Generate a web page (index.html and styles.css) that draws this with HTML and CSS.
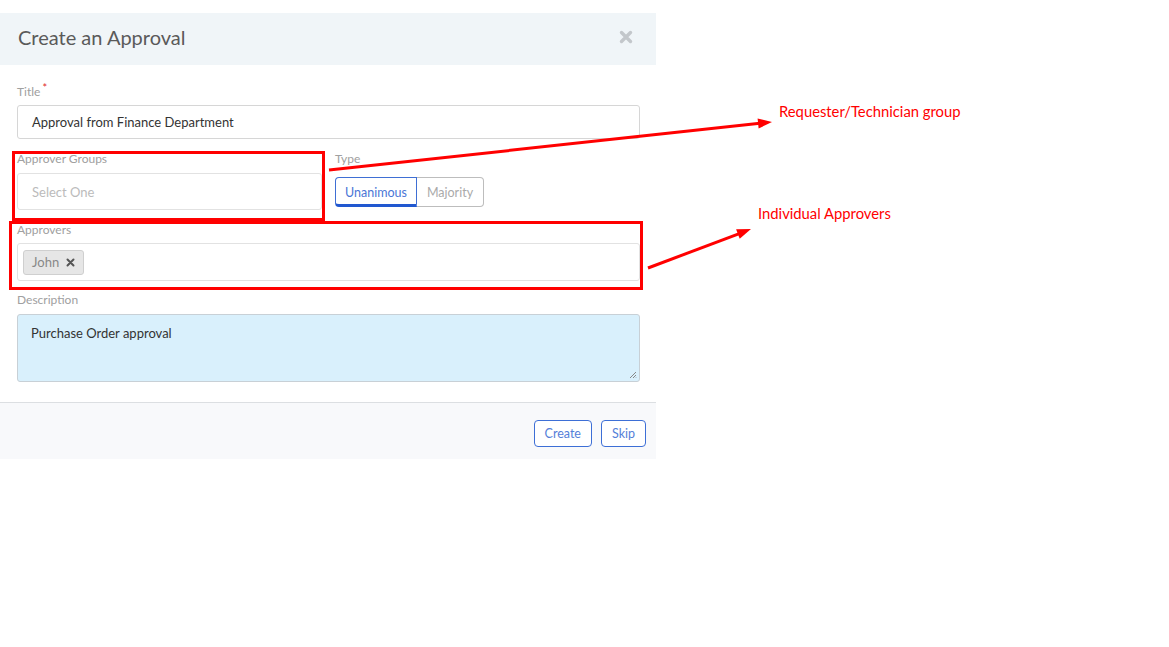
FILE: index.html
```html
<!DOCTYPE html>
<html>
<head>
<meta charset="utf-8">
<title>Create an Approval</title>
<link rel="stylesheet" href="styles.css">
</head>
<body>
<div class="page">
  <div class="dialog">
    <div class="dlg-head">
      <h1 class="dlg-title">Create an Approval</h1>
      <svg class="close" width="14" height="14" viewBox="0 0 14 14"><path d="M2.5 2.5 L11.5 11.5 M11.5 2.5 L2.5 11.5" stroke="#c3c7cb" stroke-width="3.4" stroke-linecap="round"/></svg>
    </div>
    <div class="dlg-body">
      <div class="field f-title">
        <div class="label">Title<span class="req">*</span></div>
        <div class="input input-title">Approval from Finance Department</div>
      </div>
      <div class="row">
        <div class="field col-groups">
          <div class="label">Approver Groups</div>
          <div class="input input-groups placeholder">Select One</div>
        </div>
        <div class="field col-type">
          <div class="label">Type</div>
          <div class="seg">
            <span class="seg-btn active">Unanimous</span><span class="seg-btn">Majority</span>
          </div>
        </div>
      </div>
      <div class="field f-approvers">
        <div class="label">Approvers</div>
        <div class="input input-tags">
          <span class="tag">John <svg class="tag-x" width="9" height="9" viewBox="0 0 9 9"><path d="M1.5 1.5 L7.5 7.5 M7.5 1.5 L1.5 7.5" stroke="#555" stroke-width="2" stroke-linecap="round"/></svg></span>
        </div>
      </div>
      <div class="field f-desc">
        <div class="label">Description</div>
        <div class="textarea">Purchase Order approval
          <svg class="grip" width="8" height="8" viewBox="0 0 8 8"><path d="M7 1 L1 7 M7 4 L4 7 M7 6.5 L6.5 7" stroke="#888" stroke-width="1"/></svg>
        </div>
      </div>
    </div>
    <div class="dlg-foot">
      <span class="btn">Create</span>
      <span class="btn">Skip</span>
    </div>
  </div>

  <svg class="annot" width="1169" height="647" viewBox="0 0 1169 647">
    <rect x="13.5" y="152.5" width="310" height="67" fill="none" stroke="#f00" stroke-width="3"/>
    <rect x="10.5" y="222.5" width="631" height="66" fill="none" stroke="#f00" stroke-width="3"/>
    <line x1="329" y1="170" x2="760" y2="123.3" stroke="#f00" stroke-width="3"/>
    <polygon points="772,122 758.6,128.5 757.6,118.5" fill="#f00"/>
    <line x1="648" y1="268" x2="740" y2="233.3" stroke="#f00" stroke-width="3"/>
    <polygon points="751,229 739.7,238.7 736.1,229.3" fill="#f00"/>
    <text x="779" y="117" class="annot-text">Requester/Technician group</text>
    <text x="758" y="219" class="annot-text">Individual Approvers</text>
  </svg>
</div>
</body>
</html>
```

FILE: styles.css
```css
* { box-sizing: border-box; }
html, body { margin: 0; padding: 0; background: #fff; }
body { font-family: Lato, "Open Sans", sans-serif; }
.page { position: relative; width: 1169px; height: 647px; padding-top: 13px; }

.dialog { width: 656px; background: #fff; }

.dlg-head {
  height: 52px;
  background: #f0f5f8;
  display: flex;
  align-items: center;
  justify-content: space-between;
  padding: 0 23px 4px 18px;
}
.dlg-title { margin: 0; font-size: 20px; font-weight: 400; color: #5a5a5a; }
.close { display: block; }

.dlg-body { padding: 20px 16px 20px 17px; display: flex; flex-direction: column; }
.field { display: flex; flex-direction: column; }
.label { font-size: 12px; line-height: 14px; color: #a0a0a0; height: 14px; }
.req { color: #e0262a; font-size: 11px; position: relative; top: -4px; margin-left: 2px; }

.input {
  border: 1px solid #d6d6d6;
  border-radius: 3px;
  background: #fff;
  font-size: 13px;
  color: #333;
  display: flex;
  align-items: center;
}
.input-title { height: 34px; margin-top: 6px; padding-left: 14px; }

.row { display: flex; gap: 13px; margin-top: 13px; }
.col-groups { width: 305px; }
.input-groups { height: 37px; margin-top: 7px; padding-left: 14px; border-color: #e2e2e2; }
.placeholder { color: #bbb; }

.seg { display: flex; margin-top: 11px; }
.seg-btn {
  height: 30px;
  display: inline-flex;
  align-items: center;
  justify-content: center;
  font-size: 12.5px;
  color: #aaa;
  border: 1px solid #bdbdbd;
  background: #fff;
}
.seg-btn.active {
  width: 82px;
  color: #4a76d6;
  border: 1px solid #3f6fd4;
  border-bottom: 3px solid #2158d0;
  border-radius: 4px 0 0 4px;
  padding-top: 2px;
}
.seg-btn:not(.active) { width: 67px; border-left: none; border-radius: 0 4px 4px 0; }

.f-approvers { margin-top: 13px; }
.input-tags { height: 38px; margin-top: 6px; padding-left: 5px; border-color: #e2e2e2; }
.tag {
  height: 25px;
  width: 61px;
  display: inline-flex;
  align-items: center;
  padding-left: 8px;
  gap: 7px;
  background: #e6e6e6;
  border: 1px solid #cfcfcf;
  border-radius: 3px;
  color: #888;
  font-size: 13px;
}
.tag-x { display: block; }

.f-desc { margin-top: 12px; }
.textarea {
  position: relative;
  height: 68px;
  margin-top: 7px;
  background: #d9f0fc;
  border: 1px solid #c8d0d6;
  border-radius: 3px;
  padding: 10px 13px;
  font-size: 13px;
  color: #333;
}
.grip { position: absolute; right: 2px; bottom: 2px; }

.dlg-foot {
  height: 57px;
  border-top: 1px solid #dcdfe2;
  background: #f8f9fb;
  display: flex;
  justify-content: flex-end;
  align-items: flex-start;
  gap: 9px;
  padding: 17px 10px 0 0;
}
.btn {
  height: 27px;
  display: inline-flex;
  align-items: center;
  justify-content: center;
  padding: 0 10px;
  border: 1px solid #3d6fd6;
  border-radius: 4px;
  color: #5580d8;
  font-size: 12.5px;
  background: #fff;
}

.annot { position: absolute; left: 0; top: 0; pointer-events: none; }
.annot-text { font-family: Lato, "Open Sans", sans-serif; font-size: 14.8px; fill: #f00; }
```
